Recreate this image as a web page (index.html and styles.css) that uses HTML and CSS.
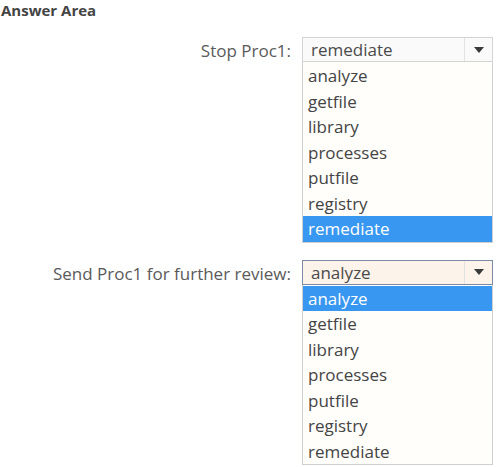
FILE: index.html
```html
<!DOCTYPE html>
<html lang="en">
<head>
  <meta charset="UTF-8">
  <title>Answer Area</title>
  <link rel="stylesheet" href="styles.css">
</head>
<body>
  <div class="title">Answer Area</div>

  <div class="answer">
    <div class="label">Stop Proc1:</div>
    <div class="dropdown">
      <div class="select">
        <span class="value">remediate</span>
        <span class="btn"><span class="arrow"></span></span>
      </div>
      <ul class="options">
        <li>analyze</li>
        <li>getfile</li>
        <li>library</li>
        <li>processes</li>
        <li>putfile</li>
        <li>registry</li>
        <li class="selected">remediate</li>
      </ul>
    </div>

    <div class="label">Send Proc1 for further review:</div>
    <div class="dropdown">
      <div class="select focus">
        <span class="value">analyze</span>
        <span class="btn"><span class="arrow"></span></span>
      </div>
      <ul class="options">
        <li class="selected">analyze</li>
        <li>getfile</li>
        <li>library</li>
        <li>processes</li>
        <li>putfile</li>
        <li>registry</li>
        <li>remediate</li>
      </ul>
    </div>
  </div>
</body>
</html>
```

FILE: styles.css
```css
body {
  margin: 0;
  padding: 0;
  background-color: #fff;
  font-family: "Open Sans", "Noto Sans", sans-serif;
  color: #555;
}

.title {
  font-size: 15px;
  font-weight: bold;
  color: #444;
  padding: 0 0 0 1px;
  line-height: 20px;
}

.answer {
  display: grid;
  grid-template-columns: 291px 191px;
  column-gap: 11px;
  row-gap: 17px;
  margin-top: 17px;
}

.label {
  text-align: right;
  font-size: 17px;
  color: #5a5a5a;
  padding-top: 3px;
  line-height: 22px;
}

.dropdown {
  display: flex;
  flex-direction: column;
}

.select {
  display: flex;
  height: 25px;
  border: 1px solid #d4d4d4;
  box-sizing: border-box;
  background-color: #fafafa;
}

.select.focus {
  border-color: #7d8aa6;
  background-color: #fcf3ea;
}

.value {
  flex: 1;
  font-size: 17px;
  line-height: 23px;
  padding-left: 8px;
  color: #4a4a4a;
}

.btn {
  width: 27px;
  border-left: 1px solid #e2e2e2;
  display: flex;
  align-items: center;
  justify-content: center;
}

.arrow {
  width: 0;
  height: 0;
  border-left: 5px solid transparent;
  border-right: 5px solid transparent;
  border-top: 6px solid #3a3a3a;
}

.options {
  list-style: none;
  margin: 0;
  padding: 1px 0 0;
  border: 1px solid #cfcfcf;
  border-top: none;
  background-color: #fffefb;
}

.options li {
  height: 25.5px;
  line-height: 25px;
  font-size: 17px;
  padding-left: 5px;
  color: #444;
}

.options li.selected {
  background-color: #3897f0;
  color: #fff;
}
```
